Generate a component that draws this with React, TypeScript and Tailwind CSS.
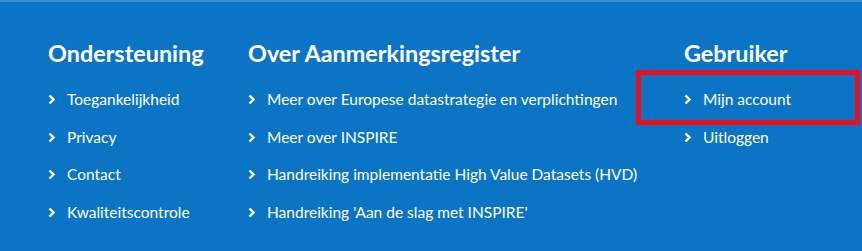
import React from 'react';

const Chevron: React.FC = () => (
  <svg width="8" height="11" viewBox="0 0 8 11" className="shrink-0">
    <polyline points="1.5,1.5 5.5,5.5 1.5,9.5" fill="none" stroke="white" strokeWidth="2.4" />
  </svg>
);

const FooterLink: React.FC<{ label: string }> = ({ label }) => (
  <li className="flex items-center h-[37.5px]">
    <Chevron />
    <a href="#" className="ml-[11px] text-white text-[15.5px]">{label}</a>
  </li>
);

const Column: React.FC<{ title: string; links: string[]; className?: string }> = ({ title, links, className }) => (
  <div className={className}>
    <h2 className="text-white font-bold text-[23.4px] leading-[28px] mb-[14px]">{title}</h2>
    <ul>
      {links.map((l) => (
        <FooterLink key={l} label={l} />
      ))}
    </ul>
  </div>
);

export default function App() {
  return (
    <footer
      className="w-[862px] h-[251px] bg-[#0b74c5] border-t-2 border-[#3a90d4] overflow-hidden"
      style={{ fontFamily: 'Lato, "Noto Sans", sans-serif' }}
    >
      <div className="flex pl-[48px] pt-[37px]">
        <Column
          className="w-[200px]"
          title="Ondersteuning"
          links={['Toegankelijkheid', 'Privacy', 'Contact', 'Kwaliteitscontrole']}
        />
        <Column
          className="w-[436px]"
          title="Over Aanmerkingsregister"
          links={[
            'Meer over Europese datastrategie en verplichtingen',
            'Meer over INSPIRE',
            'Handreiking implementatie High Value Datasets (HVD)',
            "Handreiking 'Aan de slag met INSPIRE'",
          ]}
        />
        <div className="relative">
          <Column title="Gebruiker" links={['Mijn account', 'Uitloggen']} />
          <div className="absolute left-[-48px] top-[31px] w-[224px] h-[55px] border-[5px] border-[#e8101c] pointer-events-none" />
        </div>
      </div>
    </footer>
  );
}
